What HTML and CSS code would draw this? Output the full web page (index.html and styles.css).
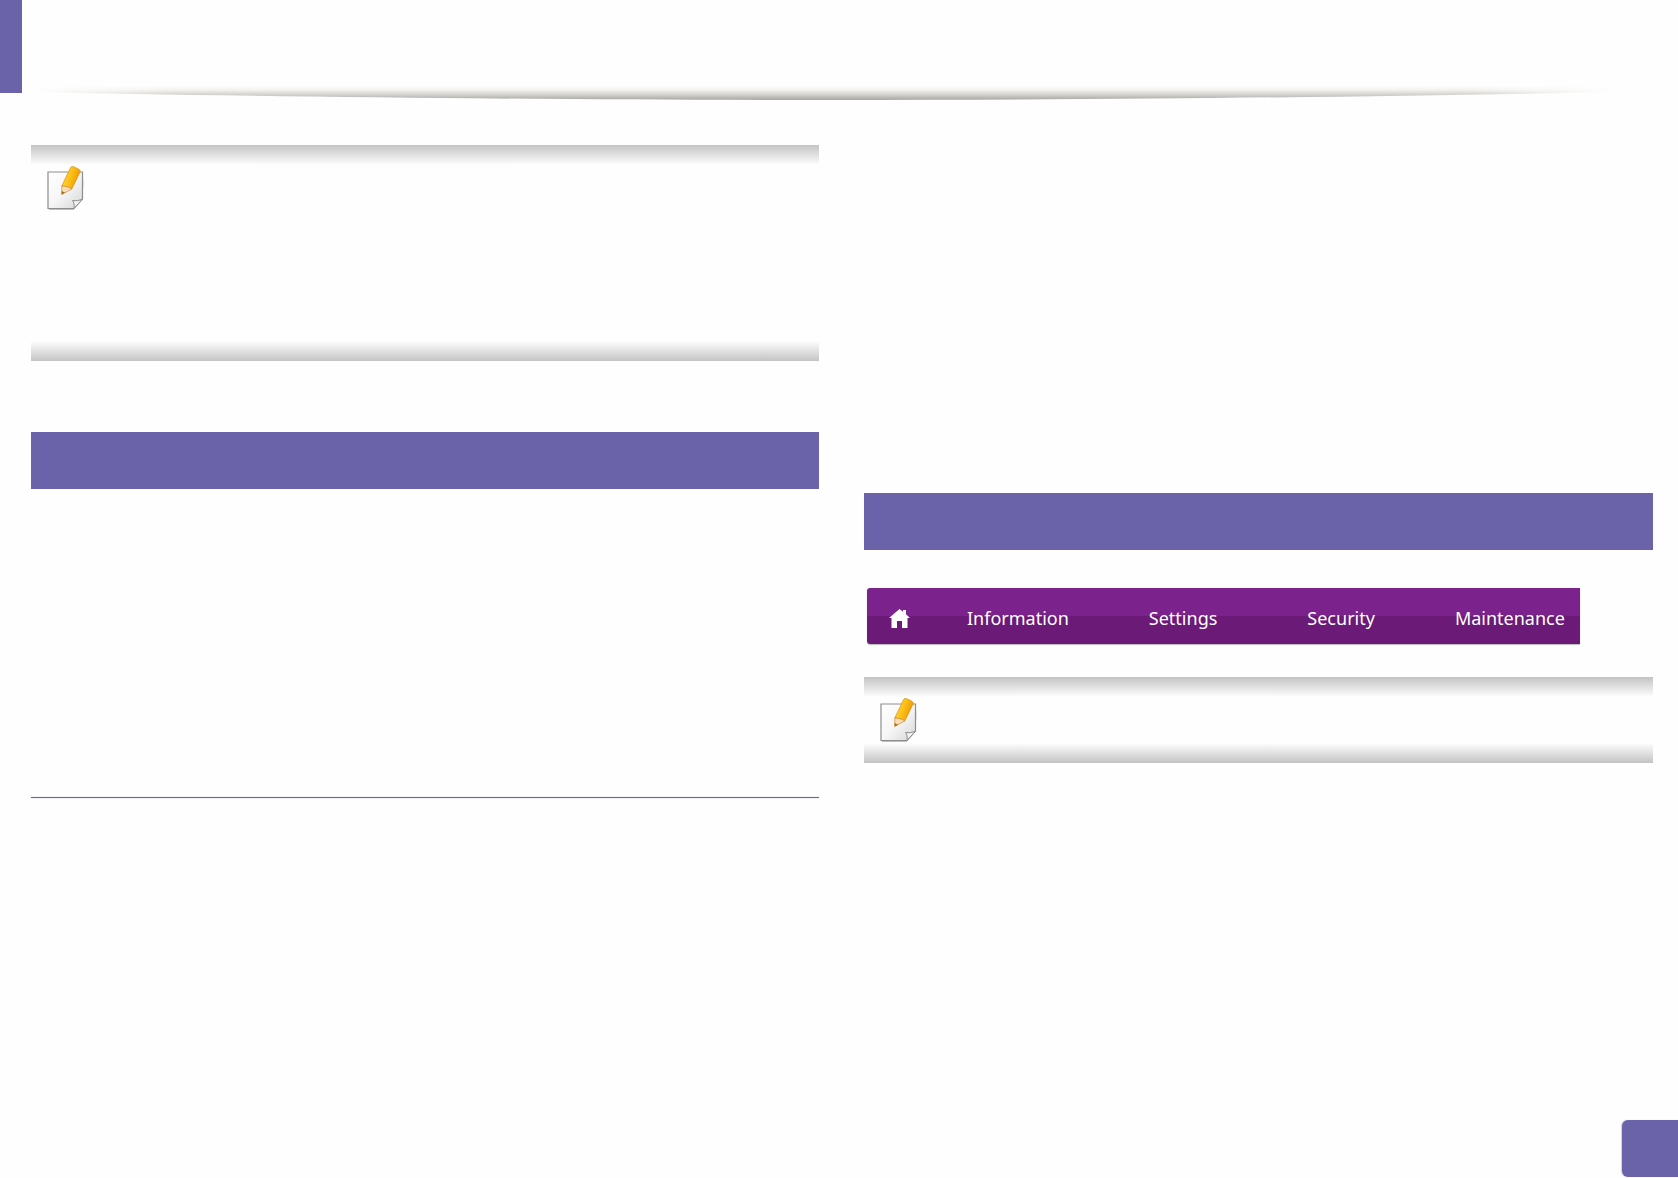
FILE: index.html
```html
<!DOCTYPE html>
<html lang="en">
<head>
<meta charset="utf-8">
<title>Machine manual page</title>
<link rel="stylesheet" href="styles.css">
</head>
<body>
<svg class="defs" width="0" height="0" aria-hidden="true">
  <defs>
    <linearGradient id="ruleFill" gradientUnits="userSpaceOnUse" x1="0" y1="0" x2="0" y2="17">
      <stop offset="0.12" stop-color="#ffffff"/>
      <stop offset="0.41" stop-color="#f2f2ee"/>
      <stop offset="0.7" stop-color="#d2d0cc"/>
      <stop offset="1" stop-color="#a8a6a2"/>
    </linearGradient>
    <linearGradient id="paperFill" x1="0" y1="0" x2="1" y2="1">
      <stop offset="0" stop-color="#ffffff"/>
      <stop offset="0.5" stop-color="#f6f6f6"/>
      <stop offset="1" stop-color="#d6d6d6"/>
    </linearGradient>
    <linearGradient id="pencilFill" x1="0" y1="0" x2="1" y2="0.35">
      <stop offset="0" stop-color="#ffe04a"/>
      <stop offset="0.55" stop-color="#fcc116"/>
      <stop offset="1" stop-color="#ec9a08"/>
    </linearGradient>
    <symbol id="noteIcon" viewBox="0 0 38 44">
      <ellipse cx="29" cy="17" rx="8.500" ry="10" fill="#e4e4e4" opacity="0.75"/>
      <path d="M1 6H35.500V33L27 42.500H1Z" fill="url(#paperFill)" stroke="#8e8e8e" stroke-width="1.200"/>
      <path d="M27 42.500C27.500 39 27 36 25.500 34.500C29 35 32.500 34.500 35.500 33Z" fill="#f2f2f2" stroke="#8e8e8e" stroke-width="1"/>
      <path d="M2 43.600H27" stroke="#bdbdbd" stroke-width="1.200"/>
      <path d="M14.800 20L23.500 1.600C24 0.600 25.500 0.300 27 0.900L31.500 3C33 3.800 33.600 5 33 6.200L24.800 23C22 21 18 20 14.800 20Z" fill="url(#pencilFill)" stroke="#dc9012" stroke-width="0.700"/>
      <path d="M14.800 20C18 20 22 21 24.800 23L14.700 28.500Z" fill="#f8ddb6" stroke="#cf8a2a" stroke-width="0.700"/>
      <path d="M14.800 25L14.700 28.500L18 26.700Z" fill="#b06a12"/>
    </symbol>
  </defs>
</svg>

<header class="top">
  <div class="chapter-tab"></div>
  <svg class="top-rule" viewBox="0 0 1585 17" preserveAspectRatio="none" aria-hidden="true">
    <path d="M0 9C200 13 500 17 800 17C1100 17 1385 13 1585 9L1585 1L0 1Z" fill="url(#ruleFill)"/>
  </svg>
</header>

<main class="columns">
  <section class="column">
    <div class="note note-tall">
      <svg class="note-icon"><use href="#noteIcon"/></svg>
    </div>
    <div class="section-bar section-bar-left"></div>
    <div class="section-end"></div>
  </section>

  <section class="column column-right">
    <div class="section-bar"></div>
    <nav class="menu">
      <svg class="menu-home" viewBox="0 0 21 19" aria-label="Home">
        <path fill="#ffffff" fill-rule="evenodd" d="M10.500 0L14 2.800V1H17V5.200L21 9H18.500V19H2.500V9H0ZM8 12V19H13V12Z"/>
      </svg>
      <span class="menu-item menu-information">Information</span>
      <span class="menu-item menu-settings">Settings</span>
      <span class="menu-item menu-security">Security</span>
      <span class="menu-item menu-maintenance">Maintenance</span>
    </nav>
    <div class="note note-short">
      <svg class="note-icon"><use href="#noteIcon"/></svg>
    </div>
  </section>
</main>

<footer class="bottom">
  <div class="page-tab"></div>
</footer>
</body>
</html>
```

FILE: styles.css
```css
* {
  box-sizing: border-box;
}

html,
body {
  margin: 0;
  height: 100%;
}

body {
  display: flex;
  flex-direction: column;
  height: 1178px;
  overflow: hidden;
  background: #fefefe;
  font-family: "Noto Sans", "DejaVu Sans", sans-serif;
}

.defs {
  display: block;
  height: 0;
}

.top {
  display: flex;
  align-items: flex-start;
  height: 100px;
  flex: none;
}

.chapter-tab {
  width: 22px;
  height: 93px;
  flex: none;
  background: #6b63aa;
}

.top-rule {
  width: 1585px;
  height: 17px;
  margin-top: 83px;
  margin-left: 8px;
  flex: none;
  -webkit-mask-image: linear-gradient(to right, transparent 0, #000 9%, #000 91%, transparent 100%);
  mask-image: linear-gradient(to right, transparent 0, #000 9%, #000 91%, transparent 100%);
}

.columns {
  display: flex;
  flex: 1;
  gap: 45px;
  padding: 45px 25px 0 31px;
}

.column {
  display: flex;
  flex-direction: column;
  width: 788px;
  flex: none;
}

.column-right {
  width: 789px;
  padding-top: 348px;
}

.note {
  display: flex;
  align-items: flex-start;
  background:
    linear-gradient(to bottom, #c4c4c4, #fefefe) top / 100% 20px no-repeat,
    linear-gradient(to top, #c4c4c4, #fefefe) bottom / 100% 20px no-repeat;
}

.note-tall {
  height: 216px;
  padding: 21px 0 0 16px;
}

.note-short {
  height: 86px;
  margin-top: 33px;
  padding: 21px 0 0 16px;
}

.note-icon {
  display: block;
  width: 38px;
  height: 44px;
  flex: none;
}

.section-bar {
  height: 57px;
  flex: none;
  background: #6b63aa;
}

.section-bar-left {
  margin-top: 71px;
}

.section-end {
  height: 1px;
  margin-top: 308px;
  background: #6b63aa;
  box-shadow: 0 0 1px #8f89c0;
}

.menu {
  display: flex;
  align-items: center;
  width: 713px;
  height: 56px;
  margin-top: 38px;
  margin-left: 3px;
  padding-top: 5px;
  padding-left: 22px;
  border-radius: 3px 0 0 3px;
  background: linear-gradient(to bottom, #7c228d 0, #7c228d 50%, #6b1a78 50%, #6b1a78 100%);
  box-shadow: 0 1px 1px #b9b9b9;
}

.menu-home {
  display: block;
  width: 21px;
  height: 19px;
  flex: none;
}

.menu-item {
  margin-top: -2px;
  color: #ffffff;
  font-size: 18px;
  line-height: 20px;
  white-space: nowrap;
}

.menu-information {
  margin-left: 57px;
}

.menu-settings {
  margin-left: 80px;
}

.menu-security {
  margin-left: 90px;
}

.menu-maintenance {
  margin-left: 80px;
}

.bottom {
  display: flex;
  justify-content: flex-end;
  flex: none;
  padding-bottom: 1px;
}

.page-tab {
  width: 56px;
  height: 57px;
  border-radius: 6px 0 0 6px;
  background: #6b63aa;
  box-shadow: -1px 0 1px #cfcce4;
}
```
